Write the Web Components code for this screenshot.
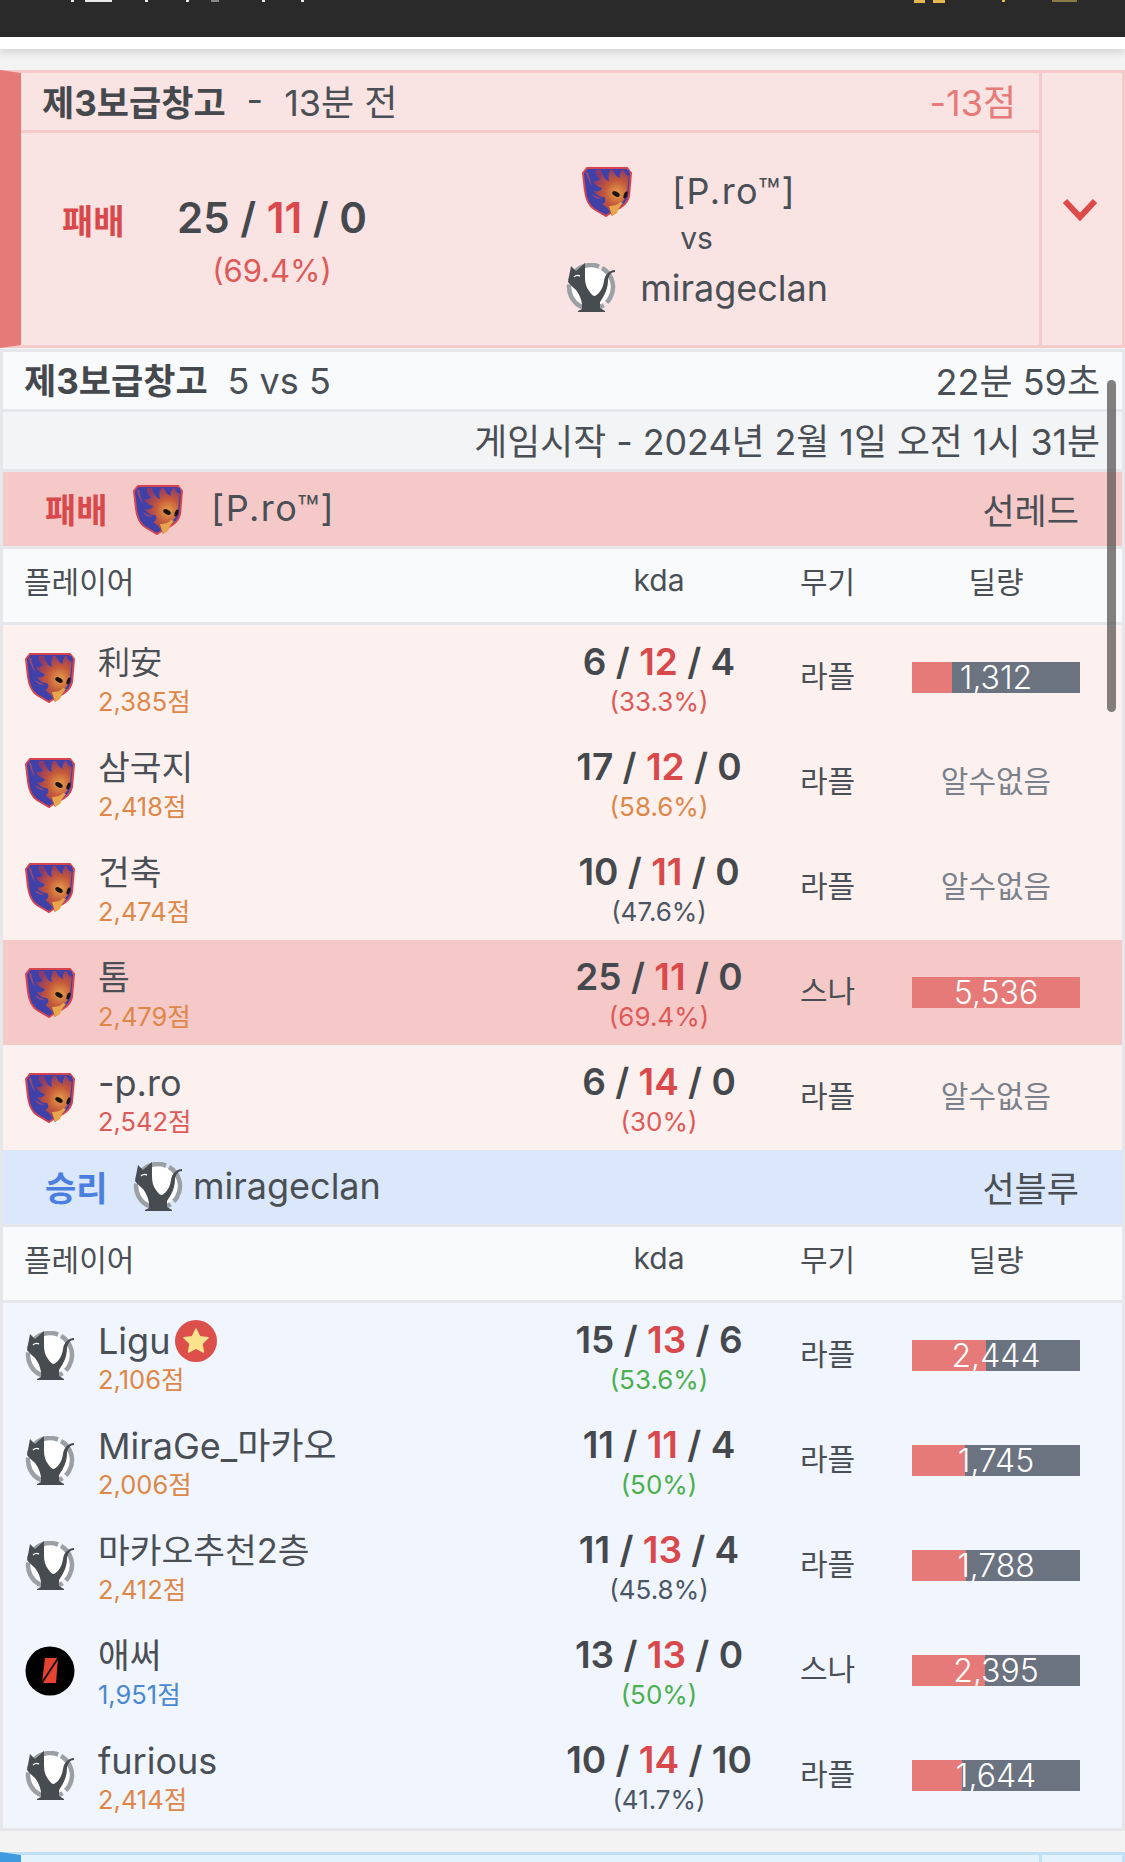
<!DOCTYPE html>
<html lang="ko">
<head>
<meta charset="utf-8">
<title>전적</title>
<style>
  html, body { margin: 0; height: 1862px; overflow: hidden; }
  body {
    background: #f3f3f3;
    color: #4a4f55;
    font-family: "Inter", "Noto Sans CJK KR", sans-serif;
  }
</style>
</head>
<body>
<app-bar></app-bar>

<match-card tone="lose" open style="margin-top:21px">
  <span slot="map">제3보급창고</span>
  <span slot="dash">-</span>
  <span slot="ago">13분 전</span>
  <span slot="delta">-13점</span>
  <span slot="result">패배</span>
  <kda-line slot="kda" big k="25" d="11" a="0" rate="69.4" tone="red"></kda-line>
  <clan-line slot="clans" mark="pro" name="[P.ro™]" shift="2" track="1.5"></clan-line>
  <div slot="clans" style="text-align:center;font-size:30px;line-height:46px;margin-right:15px;margin-top:-2px">vs</div>
  <clan-line slot="clans" mark="mirage" name="mirageclan" shift="24" style="margin:2px 6px 0 0"></clan-line>
</match-card>

<match-detail map="제3보급창고" mode="5 vs 5" length="22분 59초" started="게임시작 - 2024년 2월 1일 오전 1시 31분">
  <team-section side="red" result="패배" mark="pro" clan="[P.ro™]" color="선레드" gap="28" track="1.5">
    <player-row side="red" mark="pro" name="利安" size="32" score="2,385" k="6" d="12" a="4" rate="33.3" tone="red" weapon="라플" dmg="1312"></player-row>
    <player-row side="red" mark="pro" name="삼국지" size="34.5" score="2,418" k="17" d="12" a="0" rate="58.6" tone="orange" weapon="라플"></player-row>
    <player-row side="red" mark="pro" name="건축" size="34.5" score="2,474" k="10" d="11" a="0" rate="47.6" tone="gray" weapon="라플"></player-row>
    <player-row side="red" hot mark="pro" name="톰" size="34.5" score="2,479" k="25" d="11" a="0" rate="69.4" tone="red" weapon="스나" dmg="5536"></player-row>
    <player-row side="red" mark="pro" name="-p.ro" score="2,542" score-tone="red" k="6" d="14" a="0" rate="30" tone="red" weapon="라플"></player-row>
  </team-section>
  <team-section side="blue" result="승리" mark="mirage" clan="mirageclan" color="선블루" gap="10">
    <player-row side="blue" mark="mirage" name="Ligu" star score="2,106" k="15" d="13" a="6" rate="53.6" tone="green" weapon="라플" dmg="2444"></player-row>
    <player-row side="blue" mark="mirage" name="MiraGe_마카오" score="2,006" k="11" d="11" a="4" rate="50" tone="green" weapon="라플" dmg="1745"></player-row>
    <player-row side="blue" mark="mirage" name="마카오추천2층" size="34.5" score="2,412" k="11" d="13" a="4" rate="45.8" tone="gray" weapon="라플" dmg="1788"></player-row>
    <player-row side="blue" mark="ember" name="애써" size="34.5" score="1,951" score-tone="blue" k="13" d="13" a="0" rate="50" tone="green" weapon="스나" dmg="2395"></player-row>
    <player-row side="blue" mark="mirage" name="furious" score="2,414" k="10" d="14" a="10" rate="41.7" tone="gray" weapon="라플" dmg="1644"></player-row>
  </team-section>
</match-detail>

<match-card tone="win" style="margin-top:21px;height:7px;border-bottom:0"></match-card>

<script>
const TONES = { red: "#dd5a58", orange: "#dd8748", gray: "#4b5563", green: "#4caf50", blue: "#4a88d0" };
const MAX_DMG = 5536;
const COLS = "grid-template-columns: 541px 230px 138px 168px; padding-right: 42px;";

const MARKS = {
  pro: `<svg viewBox="0 0 50 51" width="50" height="51">
    <defs><radialGradient id="fire" gradientUnits="userSpaceOnUse" cx="35" cy="27" r="25">
      <stop offset="0" stop-color="#e6a04a"/><stop offset=".5" stop-color="#c4583a"/><stop offset="1" stop-color="#8c3a6c"/>
    </radialGradient></defs>
    <path d="M5 2H45L49 7 47 30C45 39 38 42 30 46L24 50 12 43C6 39 4 33 3 25L1 7Z" fill="#3f41a8" stroke="#d5444f" stroke-width="2"/>
    <path d="M14 4H44L47 8 45 26C44 34 40 36 36 40L35 46 30 50C28 45 25 41 20 38 24 37 24 33 22 31 18 31 14 29 12 25 16 26 19 25 20 22 16 21 12 18 11 15 14 15 17 15 18 13 15 11 13 8 14 4Z" fill="url(#fire)"/>
    <path d="M19 4C21 10 23 14 27 15 26 11 26 8 28 4ZM31 4C33 9 35 11 38 12 37 10 38 7 40 4ZM42 4C42 7 44 9 47 10V4Z" fill="#3f41a8"/>
    <path d="M6 6C7 12 9 16 10 20 8 17 5 12 4 6ZM10 28C13 30 17 32 20 32 17 34 12 32 10 28Z" fill="#a3486e"/>
    <path d="M27 40C31 40 36 39 38 36L41 37 37 42 35 47 30 50Z" fill="#e8a54c"/>
    <ellipse cx="34" cy="28" rx="4" ry="2.4" transform="rotate(28 34 28)" fill="#1c1410"/>
    <ellipse cx="43.500" cy="29" rx="1.700" ry="3.600" transform="rotate(20 43.500 29)" fill="#1c1410"/>
  </svg>`,
  mirage: `<svg viewBox="0 0 50 50" width="50" height="50">
    <circle cx="25" cy="24" r="20" fill="#fff"/>
    <circle cx="25" cy="24" r="22" fill="none" stroke="#9aa0a3" stroke-width="4.500" stroke-dasharray="40 4 50 4 36 4" transform="rotate(-60 25 24)"/>
    <path d="M2 19 5 3 10 8 19 0V14C19 20 20 24 23 28 25 31 27 33 29 33 34 30 37 25 38 18 39 11 44 7 49 7V9C45 9 43 12 42 17 42 25 39 32 34 39V45L39 48V49H12V48L16 46V41C15 35 13 31 10 27 7 24 4 22 2 19Z" fill="#474c50"/>
    <path d="M8 14C10 12 12 12 14 13" fill="none" stroke="#fff" stroke-width="1.400"/>
  </svg>`,
  ember: `<svg viewBox="0 0 50 50" width="50" height="50">
    <circle cx="25" cy="25" r="24.500" fill="#000"/>
    <path d="M20 12H33L31 37H17Z" fill="#e5432f"/>
    <path d="M33.500 11.500 16.500 37.500" stroke="#000" stroke-width="1.600"/>
  </svg>`
};

class AppBar extends HTMLElement {
  constructor() {
    super();
    this.attachShadow({ mode: "open" }).innerHTML = `
    <style>
      :host { display: block; background: #fff; height: 49px; box-shadow: 0 3px 8px rgba(0,0,0,.14); position: relative; }
      .dark { background: #2a2a2a; height: 37px; }
      svg { display: block; }
    </style>
    <div class="dark">
      <svg width="1125" height="3">
        <g fill="#e8e8e8"><rect x="71" width="3" height="2"/><rect x="85" width="27" height="2"/><rect x="145" width="3" height="2"/>
        <rect x="186" width="3" height="2"/><rect x="211" width="8" height="2" fill="#888"/><rect x="262" width="3" height="2"/><rect x="301" width="3" height="2"/></g>
        <g fill="#e3b84f"><rect x="914" width="11" height="3"/><rect x="933" width="12" height="3"/><rect x="1002" width="3" height="2"/><rect x="1052" width="25" height="2" fill="#8a7a45"/></g>
      </svg>
    </div>`;
  }
}

class ClanMark extends HTMLElement {
  constructor() {
    super();
    this.attachShadow({ mode: "open" }).innerHTML = `
    <style>:host { display: block; width: 50px; flex: none; line-height: 0; }</style>
    ${MARKS[this.getAttribute("kind")] || ""}`;
  }
}

// 25 / 11 / 0 with the rate below it
class KdaLine extends HTMLElement {
  constructor() {
    super();
    const a = (n) => this.getAttribute(n);
    this.attachShadow({ mode: "open" }).innerHTML = `
    <style>
      :host { display: block; text-align: center; white-space: nowrap; padding-top: 8px; }
      .nums { font-size: 37px; line-height: 40px; font-weight: 600; color: #45494d; }
      .nums b { font-weight: 600; color: #d9484a; }
      .rate { font-size: 26px; line-height: 40px; }
      :host([big]) { padding-top: 12px; }
      :host([big]) .nums { font-size: 42px; line-height: 50px; }
      :host([big]) .rate { font-size: 31px; line-height: 55px; }
    </style>
    <div class="nums">${a("k")} / <b>${a("d")}</b> / ${a("a")}</div>
    <div class="rate" style="color:${TONES[a("tone")]}">(${a("rate")}%)</div>`;
  }
}

class ClanLine extends HTMLElement {
  constructor() {
    super();
    const a = (n) => this.getAttribute(n);
    this.attachShadow({ mode: "open" }).innerHTML = `
    <style>
      :host { display: flex; align-items: center; justify-content: flex-end; }
      .name { width: 200px; text-align: center; font-size: 36px; color: #4a4f55; letter-spacing: ${a("track") || 0}px; }
    </style>
    <clan-mark kind="${a("mark")}" style="margin-right:${a("shift")}px"></clan-mark>
    <div class="name">${a("name")}</div>`;
  }
}

const cardTemplate = document.createElement("template");
cardTemplate.innerHTML = `
<style>
  :host { display: flex; overflow: hidden; border: solid #f5caca; border-width: 3px 3px 3px 21px; border-left-color: #e57a78; background: #f9e3e3; height: 272px; }
  :host([tone=win]) { border-color: #bfe0f5; border-left-color: #3f9ae0; background: #e3f3fd; }
  .main { flex: 1; display: flex; flex-direction: column; min-width: 0; }
  .title { flex: none; box-sizing: border-box; border-bottom: 3px solid #f5caca; height: 60px; display: flex; align-items: center; padding: 0 23px 3px 21px; font-size: 36px; }
  :host([tone=win]) .title { border-color: #bfe0f5; }
  .title .map { font-weight: 700; font-size: 35px; color: #45494d; }
  .title .dash { margin: 0 21px; }
  .title .delta { margin-left: auto; color: #e57a78; }
  .body { flex: 1; display: flex; align-items: center; padding-left: 41px; }
  .result { width: 62px; white-space: nowrap; font-size: 34px; font-weight: 700; color: #d9484a; margin-top: -40px; }
  .kda { width: 228px; margin-left: 34px; }
  .clans { margin-left: 188px; width: 260px; display: flex; flex-direction: column; }
  .chev { flex: none; width: 80px; border-left: 3px solid #f5caca; display: flex; align-items: center; justify-content: center; }
  .chev svg { display: none; margin-right: 4px; }
  :host([open]) .chev svg { display: block; }
  :host([tone=win]) .chev { border-color: #bfe0f5; }
</style>
<div class="main">
  <div class="title">
    <span class="map"><slot name="map"></slot></span><span class="dash"><slot name="dash"></slot></span><slot name="ago"></slot>
    <span class="delta"><slot name="delta"></slot></span>
  </div>
  <div class="body">
    <div class="result"><slot name="result"></slot></div>
    <div class="kda"><slot name="kda"></slot></div>
    <div class="clans"><slot name="clans"></slot></div>
  </div>
</div>
<div class="chev">
  <svg width="36" height="24" viewBox="0 0 36 24"><path d="M3 4 18 20 33 4" fill="none" stroke="#dc4a4a" stroke-width="6"/></svg>
</div>`;

class MatchCard extends HTMLElement {
  constructor() {
    super();
    this.attachShadow({ mode: "open" }).appendChild(cardTemplate.content.cloneNode(true));
  }
}

class MatchDetail extends HTMLElement {
  constructor() {
    super();
    const a = (n) => this.getAttribute(n);
    this.attachShadow({ mode: "open" }).innerHTML = `
    <style>
      :host { display: block; position: relative; margin-top: 1px; border: 3px solid #e5e7eb; background: #f9fafb; }
      .row { display: flex; align-items: center; justify-content: space-between; height: 57px; box-sizing: content-box; border-bottom: 3px solid #e5e7eb; padding: 0 22px 0 21px; font-size: 36px; }
      .row > * { position: relative; top: -2px; }
      .row b { font-weight: 700; font-size: 35px; color: #45494d; margin-right: 20px; }
      .when { background: #f3f4f6; justify-content: flex-end; font-size: 35.800px; }
      .thumb { position: absolute; top: 28px; right: 6px; width: 9px; height: 332px; border-radius: 5px; background: rgba(90,85,85,.75); }
    </style>
    <div class="row"><div><b>${a("map")}</b>${a("mode")}</div><div>${a("length")}</div></div>
    <div class="row when"><div>${a("started")}</div></div>
    <slot></slot>
    <div class="thumb"></div>`;
  }
}

class TeamSection extends HTMLElement {
  constructor() {
    super();
    const a = (n) => this.getAttribute(n);
    this.attachShadow({ mode: "open" }).innerHTML = `
    <style>
      :host { display: block; }
      .head { height: 74px; display: flex; align-items: center; background: #f5c9c8; border-bottom: 3px solid #e5e7eb; padding: 0 43px 0 42px; font-size: 36px; }
      :host([side=blue]) .head { background: #dbe7fb; }
      .head > div { position: relative; top: -1px; }
      .result { width: 62px; font-size: 34px; white-space: nowrap; font-weight: 600; color: #d9484a; margin-right: 26px; }
      :host([side=blue]) .result { color: #4a7fe0; }
      .clan { letter-spacing: ${a("track") || 0}px; }
      .side { margin-left: auto; font-size: 35px; }
      .cols { display: grid; ${COLS} box-sizing: border-box; height: 76px; padding-bottom: 12px; align-items: center; border-bottom: 3px solid #e5e7eb; font-size: 30px; }
      .cols div:nth-child(1) { padding-left: 21px; }
      .cols div:nth-child(2), .cols div:nth-child(4) { text-align: center; }
      .cols div:nth-child(3) { padding-left: 26px; }
    </style>
    <div class="head">
      <div class="result">${a("result")}</div>
      <clan-mark kind="${a("mark")}" style="margin-right:${a("gap")}px"></clan-mark>
      <div class="clan">${a("clan")}</div>
      <div class="side">${a("color")}</div>
    </div>
    <div class="cols"><div>플레이어</div><div>kda</div><div>무기</div><div>딜량</div></div>
    <slot></slot>`;
  }
}

class DmgBar extends HTMLElement {
  constructor() {
    super();
    const v = Number(this.getAttribute("value"));
    const pct = (v / MAX_DMG) * 100;
    this.attachShadow({ mode: "open" }).innerHTML = `
    <style>
      :host { display: block; height: 31px; background: #6b7280; position: relative; overflow: hidden; }
      .fill { height: 100%; background: #e57a78; }
      .txt { position: absolute; inset: 0; text-align: center; color: #fff; font-size: 32px; line-height: 31px; font-weight: 300; }
    </style>
    <div class="fill" style="width:${pct}%"></div>
    <div class="txt">${v.toLocaleString("en-US")}</div>`;
  }
}

class PlayerRow extends HTMLElement {
  constructor() {
    super();
    const a = (n) => this.getAttribute(n);
    const dmg = a("dmg")
      ? `<dmg-bar value="${a("dmg")}"></dmg-bar>`
      : `<div class="none">알수없음</div>`;
    const star = this.hasAttribute("star")
      ? `<svg class="star" width="42" height="42" viewBox="0 0 42 42"><circle cx="21" cy="21" r="21" fill="#dc4f4a"/><path d="M21 9l3.700 7.700 8.300 1.100-6.100 5.800 1.500 8.400-7.400-4-7.400 4 1.500-8.400-6.100-5.800 8.300-1.100z" fill="#fbe38e" stroke="#fbe38e" stroke-width="1.500" stroke-linejoin="round"/></svg>`
      : "";
    this.attachShadow({ mode: "open" }).innerHTML = `
    <style>
      :host { display: grid; ${COLS} height: 105px; align-items: center; background: #fdf1f0; }
      :host([side=blue]) { background: #f0f5fe; }
      :host([hot]) { background: #f5c9c8; }
      .who { display: flex; align-items: center; padding-left: 22px; gap: 23px; }
      .info { padding-top: 7px; }
      .name { font-size: ${a("size") || 36}px; line-height: 42px; display: flex; align-items: center; gap: 5px; color: #4a4f55; white-space: nowrap; }
      .score { font-size: 25.500px; line-height: 36px; color: ${TONES[a("score-tone") || "orange"]}; }
      .weapon { font-size: 30px; padding: 0 0 8px 26px; }
      .none { text-align: center; font-size: 30px; padding-bottom: 8px; color: #7b818b; }
      .star { flex: none; }
    </style>
    <div class="who">
      <clan-mark kind="${a("mark")}"></clan-mark>
      <div class="info">
        <div class="name">${a("name")}${star}</div>
        <div class="score">${a("score")}점</div>
      </div>
    </div>
    <kda-line k="${a("k")}" d="${a("d")}" a="${a("a")}" rate="${a("rate")}" tone="${a("tone")}"></kda-line>
    <div class="weapon">${a("weapon")}</div>
    ${dmg}`;
  }
}

customElements.define("clan-mark", ClanMark);
customElements.define("kda-line", KdaLine);
customElements.define("clan-line", ClanLine);
customElements.define("dmg-bar", DmgBar);
customElements.define("app-bar", AppBar);
customElements.define("match-card", MatchCard);
customElements.define("player-row", PlayerRow);
customElements.define("team-section", TeamSection);
customElements.define("match-detail", MatchDetail);
</script>
</body>
</html>
